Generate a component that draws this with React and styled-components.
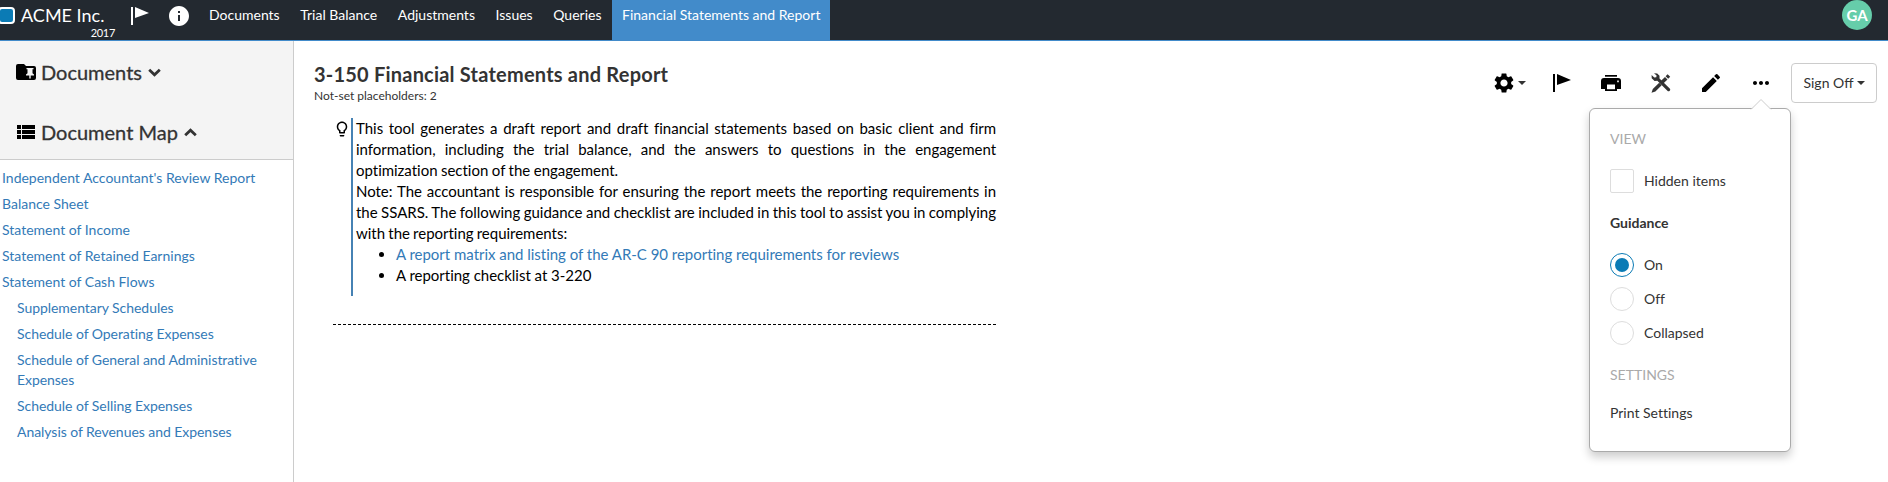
import React from 'react';
import styled, { createGlobalStyle, css } from 'styled-components';
import { MdSettings, MdEdit, MdMoreHoriz, MdInfo, MdViewList, MdLightbulbOutline } from 'react-icons/md';

const Global = createGlobalStyle`
  *, *::before, *::after { box-sizing: border-box; }
  body {
    margin: 0;
    background: #fff;
    color: #333;
    font: 14px/20px Lato, sans-serif;
    font-variant-ligatures: none;
    overflow: hidden;
  }
  button { font-variant-ligatures: none; }
  svg { display: block; flex: none; }
`;

const Page = styled.div`
  display: flex;
  flex-direction: column;
  height: 482px;
`;

const TopBar = styled.header`
  display: flex;
  height: 41px;
  flex: none;
  background: #232930;
  border-bottom: 1px solid #428bca;
  color: #fff;
`;

const Brand = styled.div`
  display: flex;
  width: 115px;
  flex: none;
`;

const Logo = styled.span`
  width: 17px;
  height: 17px;
  flex: none;
  margin: 7px 6px 0 -2px;
  background: #0b7bb5;
  border: 2px solid #fff;
  border-radius: 4px;
`;

const BrandText = styled.div`
  display: flex;
  flex-direction: column;
  flex: none;
  width: 94px;
`;

const Company = styled.span`
  font-size: 18px;
  line-height: 20px;
  padding-top: 5px;
`;

const Year = styled.span`
  font-size: 11px;
  line-height: 12px;
  padding-top: 2px;
  letter-spacing: -0.3px;
  align-self: flex-end;
`;

const BarIcons = styled.div`
  display: flex;
  gap: 12px;
  width: 84px;
  padding: 4px 0 0 16px;
`;

const Tabs = styled.nav`
  display: flex;
  gap: 0.6px;
`;

const Tab = styled.a`
  padding: 5px 10px 0;
  height: ${p => (p.$active ? 41 : 40)}px;
  white-space: nowrap;
  font-size: 14px;
  background: ${p => (p.$active ? '#428bca' : 'transparent')};
`;

const Avatar = styled.span`
  width: 30px;
  height: 30px;
  margin: 0 16px 0 auto;
  border-radius: 50%;
  background: #66cdaa;
  font-weight: 700;
  font-size: 15px;
  line-height: 30px;
  text-align: center;
`;

const Body = styled.div`
  display: flex;
  flex: 1;
`;

const Sidebar = styled.aside`
  width: 294px;
  flex: none;
  border-right: 1px solid #ccc;
`;

const SideHead = styled.div`
  height: 119px;
  padding-top: 1px;
  background: #f4f4f4;
  border-bottom: 1px solid #ccc;
`;

const SideTitle = styled.div`
  display: flex;
  align-items: center;
  height: 60px;
  padding-left: 14px;
  font-size: 20px;
`;

const SideLabel = styled.span`
  margin: 0 6px 0 3px;
  -webkit-text-stroke: 0.3px currentColor;
`;

const MapList = styled.ul`
  list-style: none;
  margin: 0;
  padding: 8px 20px 0 2px;
  display: flex;
  flex-direction: column;
  gap: 6px;
`;

const MapItem = styled.li`
  color: #337ab7;
  padding-left: ${p => (p.$nested ? 15 : 0)}px;
  letter-spacing: ${p => (p.$nested ? -0.05 : 0)}px;
`;

const Main = styled.main`
  display: flex;
  flex: 1;
  justify-content: space-between;
  padding: 22px 11px 0 20px;
`;

const Title = styled.h1`
  margin: -1px 0 1px;
  font-size: 20px;
  line-height: 24px;
  font-weight: 700;
  letter-spacing: 0.21px;
`;

const Placeholders = styled.div`
  font-size: 12px;
  line-height: 17px;
`;

const Doc = styled.section`
  width: 663px;
  margin: 14px 0 0 19px;
  padding-bottom: 28px;
  border-bottom: 1px dashed #000;
  display: flex;
`;

const Bulb = styled.div`
  width: 18px;
  padding-top: 2px;
`;

const Guidance = styled.div`
  width: 645px;
  height: 178px;
  border-left: 2px solid #4682b4;
  padding-left: 3px;
  font-size: 15px;
  line-height: 21px;
  letter-spacing: -0.02px;
  color: #000;
  text-align: justify;
  ul { margin: 0; padding-left: 40px; }
`;

const Paragraph = styled.p`
  margin: 0;
  word-spacing: ${p => (p.$tight ? -0.6 : -0.3)}px;
`;

const DocLink = styled.a`
  color: #337ab7;
`;

const Tools = styled.div`
  display: flex;
  align-items: center;
  height: 40px;
`;

const ToolButton = styled.button`
  display: flex;
  align-items: center;
  position: relative;
  width: ${p => p.$width || 24}px;
  height: 24px;
  margin-right: ${p => p.$after}px;
  padding: 0;
  border: 0;
  background: none;
  color: #000;
`;

const Caret = styled.span`
  display: inline-block;
  border: 4px solid transparent;
  border-top-color: #333;
  border-bottom: 0;
  margin-left: ${p => p.$gap}px;
`;

const SignOff = styled.button`
  display: flex;
  align-items: center;
  justify-content: center;
  width: 86px;
  height: 40px;
  padding: 0;
  border: 1px solid #ccc;
  border-radius: 4px;
  background: #fff;
  color: #333;
  font: 14px/20px Lato, sans-serif;
`;

const Popover = styled.div`
  position: absolute;
  z-index: 2;
  top: 37px;
  right: -18px;
  width: 202px;
  height: 344px;
  padding: 20px;
  background: #fff;
  border: 1px solid #aaa;
  border-radius: 6px;
  box-shadow: 0 5px 10px rgba(0, 0, 0, 0.2);
  color: #333;
  font: 14px/20px Lato, sans-serif;
  font-variant-ligatures: none;
  text-align: left;
`;

const Arrow = styled.svg`
  position: absolute;
  top: -11px;
  right: 18px;
`;

const MenuHeading = styled.div`
  color: #aaa;
  margin-bottom: ${p => p.$after}px;
`;

const MenuText = styled.div`
  font-weight: ${p => (p.$bold ? 700 : 400)};
  margin-bottom: 20px;
`;

const Option = styled.label`
  display: flex;
  align-items: center;
  gap: 10px;
  height: 24px;
  margin-bottom: ${p => p.$after}px;
`;

const Mark = styled.span`
  display: flex;
  align-items: center;
  justify-content: center;
  width: 24px;
  height: 24px;
  border: 1px solid #ddd;
  border-radius: ${p => (p.$round ? '50%' : '2px')};
  ${p => p.$on && css`
    border-color: #0b7bb5;
    &::after {
      content: '';
      width: 14px;
      height: 14px;
      border-radius: 50%;
      background: #0b7bb5;
    }
  `}
`;

const Flag = () => (
  <svg width="24" height="24" viewBox="0 0 24 24" fill="currentColor">
    <path d="M0 3h2v18H0zM4 3l14 6-14 5z" />
  </svg>
);

const Printer = () => (
  <svg width="24" height="24" viewBox="0 0 24 24" fill="#000">
    <path d="M6 4h12v1.700H6z" />
    <path fillRule="evenodd" d="M5 7h14a3 3 0 0 1 3 3v8h-4v2H6v-2H2v-8a3 3 0 0 1 3-3zM8 13.500v4.700h8v-4.700zM18.200 9.500v1.700h1.600V9.500z" />
  </svg>
);

const PinnedFolder = () => (
  <svg width="24" height="24" viewBox="0 0 24 24">
    <path fill="#000" d="M4 4h6l2 2h8a2 2 0 0 1 2 2v10a2 2 0 0 1-2 2H4a2 2 0 0 1-2-2V6a2 2 0 0 1 2-2z" />
    <path fill="#f4f4f4" d="M12.500 8h7v1.200h-1v4l1.500 1.300v1h-3.300v3h-1.400v-3H12v-1l1.500-1.300v-4h-1z" />
  </svg>
);

const Chevron = ({ up }) => (
  <svg width="13" height="9" viewBox="0 0 13 9" fill="none" stroke="#333" strokeWidth="2.800">
    <path d={up ? 'M1.200 7.200l5.300-5 5.300 5' : 'M1.200 1.800l5.300 5 5.300-5'} />
  </svg>
);

const CrossedTools = () => (
  <svg width="24" height="24" viewBox="0 0 24 24" fill="#333">
    <path d="M5 2.300l3.200.1 2.300 2.400v2.700l10.200 10.100c.7.700.7 1.500 0 2.200s-1.600.7-2.300 0L8.300 9.800l-2.700.1-2.900-2.700L2.600 4l2.700 2.600 2-.3.300-1.900z" />
    <path d="M18.600 3.200l2.600 2.500-2 2.100-2.600-2.600zM16 5.900l2.500 2.500-4.200 4.200-2.500-2.600zM10.200 11.700l2.500 2.500-6.300 6.200-3.900 1.400 1.300-3.800z" />
  </svg>
);

const tabs = ['Documents', 'Trial Balance', 'Adjustments', 'Issues', 'Queries'];

const mapItems = [
  ["Independent Accountant's Review Report", false],
  ['Balance Sheet', false],
  ['Statement of Income', false],
  ['Statement of Retained Earnings', false],
  ['Statement of Cash Flows', false],
  ['Supplementary Schedules', true],
  ['Schedule of Operating Expenses', true],
  ['Schedule of General and Administrative Expenses', true],
  ['Schedule of Selling Expenses', true],
  ['Analysis of Revenues and Expenses', true],
];

const ViewMenu = () => (
  <Popover>
    <Arrow width="22" height="12" viewBox="0 0 22 12">
      <path d="M1 11.500L11 1.500l10 10" fill="#fff" stroke="#ccc" />
      <path d="M1.500 11.500h19" stroke="#fff" />
    </Arrow>
    <MenuHeading $after={20}>VIEW</MenuHeading>
    <Option $after={20}><Mark />Hidden items</Option>
    <MenuText $bold>Guidance</MenuText>
    <Option $after={10}><Mark $round $on />On</Option>
    <Option $after={10}><Mark $round />Off</Option>
    <Option $after={20}><Mark $round />Collapsed</Option>
    <MenuHeading $after={18}>SETTINGS</MenuHeading>
    <MenuText>Print Settings</MenuText>
  </Popover>
);

export default function App() {
  return (
    <Page>
      <Global />
      <TopBar>
        <Brand>
          <Logo />
          <BrandText>
            <Company>ACME Inc.</Company>
            <Year>2017</Year>
          </BrandText>
        </Brand>
        <BarIcons>
          <Flag />
          <MdInfo size={24} />
        </BarIcons>
        <Tabs>
          {tabs.map(t => <Tab key={t}>{t}</Tab>)}
          <Tab $active>Financial Statements and Report</Tab>
        </Tabs>
        <Avatar>GA</Avatar>
      </TopBar>
      <Body>
        <Sidebar>
          <SideHead>
            <SideTitle><PinnedFolder /><SideLabel>Documents</SideLabel><Chevron /></SideTitle>
            <SideTitle><MdViewList size={24} color="#000" /><SideLabel>Document Map</SideLabel><Chevron up /></SideTitle>
          </SideHead>
          <MapList>
            {mapItems.map(([text, nested]) => <MapItem key={text} $nested={nested}>{text}</MapItem>)}
          </MapList>
        </Sidebar>
        <Main>
          <div>
            <Title>3-150 Financial Statements and Report</Title>
            <Placeholders>Not-set placeholders: 2</Placeholders>
            <Doc>
              <Bulb><MdLightbulbOutline size={18} color="#000" /></Bulb>
              <Guidance>
                <Paragraph>This tool generates a draft report and draft financial statements based on basic client and firm information, including the trial balance, and the answers to questions in the engagement optimization section of the engagement.</Paragraph>
                <Paragraph $tight>Note: The accountant is responsible for ensuring the report meets the reporting requirements in the SSARS. The following guidance and checklist are included in this tool to assist you in complying with the reporting requirements:</Paragraph>
                <ul>
                  <li><DocLink>A report matrix and listing of the AR-C 90 reporting requirements for reviews</DocLink></li>
                  <li>A reporting checklist at 3-220</li>
                </ul>
              </Guidance>
            </Doc>
          </div>
          <Tools>
            <ToolButton $width={34} $after={27}><MdSettings size={24} /><Caret $gap={2} /></ToolButton>
            <ToolButton $after={22}><Flag /></ToolButton>
            <ToolButton $after={26}><Printer /></ToolButton>
            <ToolButton $after={26}><CrossedTools /></ToolButton>
            <ToolButton $after={26}><MdEdit size={24} /></ToolButton>
            <ToolButton as="div" $after={18}><MdMoreHoriz size={24} /><ViewMenu /></ToolButton>
            <SignOff>Sign Off<Caret $gap={3} /></SignOff>
          </Tools>
        </Main>
      </Body>
    </Page>
  );
}
